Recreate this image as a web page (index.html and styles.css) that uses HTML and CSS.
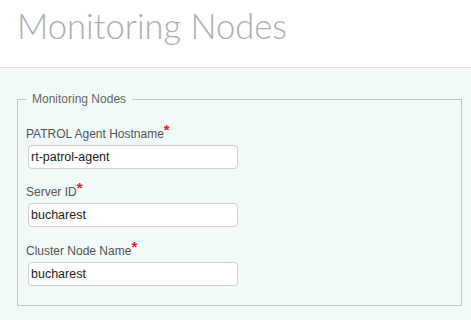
FILE: index.html
```html
<!DOCTYPE html>
<html>
<head>
  <meta charset="UTF-8">
  <title>Monitoring Nodes</title>
  <link rel="stylesheet" href="styles.css">
</head>
<body>
<div class="header">
  <h1 class="title">Monitoring Nodes</h1>
</div>
<div class="content">
  <fieldset class="group">
    <legend>Monitoring Nodes</legend>
    <div class="row">
      <label class="label">PATROL Agent Hostname<span class="req">*</span></label>
      <input class="field" type="text" value="rt-patrol-agent">
    </div>
    <div class="row">
      <label class="label">Server ID<span class="req">*</span></label>
      <input class="field" type="text" value="bucharest">
    </div>
    <div class="row last">
      <label class="label">Cluster Node Name<span class="req">*</span></label>
      <input class="field" type="text" value="bucharest">
    </div>
  </fieldset>
</div>
</body>
</html>
```
FILE: styles.css
```css
html, body {
  margin: 0;
  padding: 0;
  height: 100%;
  background: #f2f9f9;
  font-family: "Liberation Sans", Arial, sans-serif;
}

.header {
  background: #fff;
  height: 68px;
  border-bottom: 1px solid #e0e0e0;
  box-sizing: border-box;
  padding: 0 17px;
}
.title {
  margin: 0;
  font-family: Lato, sans-serif;
  font-weight: 300;
  font-size: 34.5px;
  line-height: 52px;
  color: #adadad;
}

.content {
  padding: 23px 9px 0 17px;
}

.group {
  margin: 0;
  padding: 19px 8px 19px 8px;
  border: 1px solid #c4c4c4;
}
.group legend {
  padding: 0 6px;
  font-size: 12px;
  line-height: 16px;
  color: #666;
}

.row {
  margin-bottom: 15px;
}
.row.last {
  margin-top: 16px;
  margin-bottom: 0;
}
.label {
  display: block;
  font-size: 12px;
  line-height: 16px;
  height: 16px;
  color: #555;
  margin-bottom: 3px;
}
.req {
  color: #f31a1a;
  font-size: 15px;
  font-weight: bold;
  line-height: 0;
  vertical-align: 3px;
}
.field {
  display: block;
  margin-left: 2px;
  width: 210px;
  height: 24px;
  box-sizing: border-box;
  border: 1px solid #cfcfcf;
  border-radius: 4px;
  padding: 0 2px;
  font-family: "Liberation Sans", Arial, sans-serif;
  font-size: 12.5px;
  color: #222;
  background: #fff;
}
```
